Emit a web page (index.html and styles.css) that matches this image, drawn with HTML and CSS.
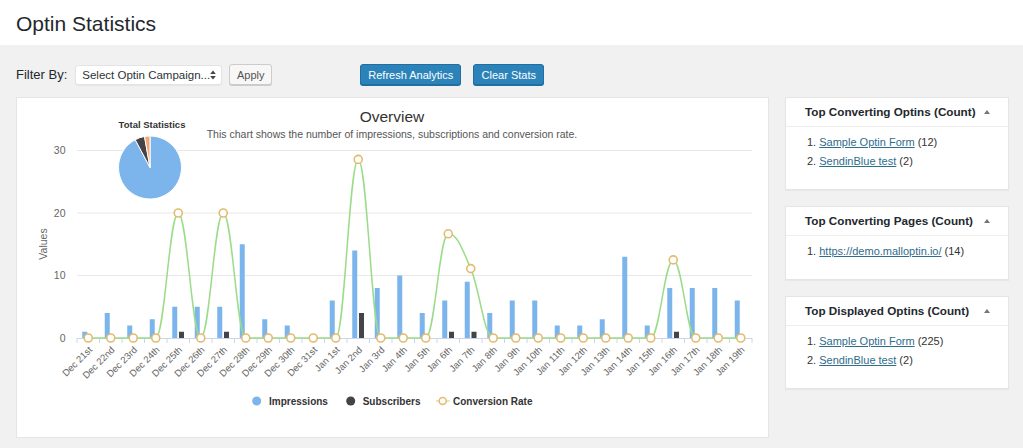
FILE: index.html
```html
<!DOCTYPE html>
<html lang="en">
<head>
<meta charset="utf-8">
<title>Optin Statistics</title>
<link rel="stylesheet" href="styles.css">
</head>
<body>
<header class="page-head"><h1>Optin Statistics</h1></header>

<div class="toolbar">
  <label class="filter-label">Filter By:</label>
  <div class="select">
    <span>Select Optin Campaign...</span>
    <svg class="updown" width="6" height="10" viewBox="0 0 6 10"><path d="M3 0.5 L5.8 4 H0.2 Z M3 9.5 L5.8 6 H0.2 Z"/></svg>
  </div>
  <button class="btn btn-apply">Apply</button>
  <button class="btn btn-primary btn-refresh">Refresh Analytics</button>
  <button class="btn btn-primary btn-clear">Clear Stats</button>
</div>

<main class="layout">
  <section class="chart-panel">
    <svg class="chart" width="751" height="339" viewBox="17 98 751 339">
      <text class="c-title" x="392" y="121.5" text-anchor="middle">Overview</text>
      <text class="c-sub" x="392" y="137.5" text-anchor="middle">This chart shows the number of impressions, subscriptions and conversion rate.</text>

      <g class="grid">
        <line x1="77" x2="752" y1="150.5" y2="150.5"/>
        <line x1="77" x2="752" y1="213" y2="213"/>
        <line x1="77" x2="752" y1="275.5" y2="275.5"/>
      </g>
      <line class="axis" x1="77" x2="752" y1="338.5" y2="338.5"/>
      <path class="ticks" d="M77,338v5M99.5,338v5M122,338v5M144.5,338v5M167,338v5M189.5,338v5M212,338v5M234.5,338v5M257,338v5M279.5,338v5M302,338v5M324.5,338v5M347,338v5M369.5,338v5M392,338v5M414.5,338v5M437,338v5M459.5,338v5M482,338v5M504.5,338v5M527,338v5M549.5,338v5M572,338v5M594.5,338v5M617,338v5M639.5,338v5M662,338v5M684.5,338v5M707,338v5M729.5,338v5M752,338v5"/>

      <g class="ylab">
        <text x="65.5" y="154" text-anchor="end">30</text>
        <text x="65.5" y="216.5" text-anchor="end">20</text>
        <text x="65.5" y="279" text-anchor="end">10</text>
        <text x="65.5" y="341.5" text-anchor="end">0</text>
      </g>
      <text class="ytitle" x="0" y="0" text-anchor="middle" transform="translate(46.5,244) rotate(-90)">Values</text>

      <g class="bars-imp">
        <rect x="82.25" y="331.75" width="5" height="6.25"/>
        <rect x="104.75" y="313" width="5" height="25"/>
        <rect x="127.25" y="325.5" width="5" height="12.5"/>
        <rect x="149.75" y="319.25" width="5" height="18.75"/>
        <rect x="172.25" y="306.75" width="5" height="31.25"/>
        <rect x="194.75" y="306.75" width="5" height="31.25"/>
        <rect x="217.25" y="306.75" width="5" height="31.25"/>
        <rect x="239.75" y="244.25" width="5" height="93.75"/>
        <rect x="262.25" y="319.25" width="5" height="18.75"/>
        <rect x="284.75" y="325.5" width="5" height="12.5"/>
        <rect x="329.75" y="300.5" width="5" height="37.5"/>
        <rect x="352.25" y="250.5" width="5" height="87.5"/>
        <rect x="374.75" y="288" width="5" height="50"/>
        <rect x="397.25" y="275.5" width="5" height="62.5"/>
        <rect x="419.75" y="313" width="5" height="25"/>
        <rect x="442.25" y="300.5" width="5" height="37.5"/>
        <rect x="464.75" y="281.75" width="5" height="56.25"/>
        <rect x="487.25" y="313" width="5" height="25"/>
        <rect x="509.75" y="300.5" width="5" height="37.5"/>
        <rect x="532.25" y="300.5" width="5" height="37.5"/>
        <rect x="554.75" y="325.5" width="5" height="12.5"/>
        <rect x="577.25" y="325.5" width="5" height="12.5"/>
        <rect x="599.75" y="319.25" width="5" height="18.75"/>
        <rect x="622.25" y="256.75" width="5" height="81.25"/>
        <rect x="644.75" y="325.5" width="5" height="12.5"/>
        <rect x="667.25" y="288" width="5" height="50"/>
        <rect x="689.75" y="288" width="5" height="50"/>
        <rect x="712.25" y="288" width="5" height="50"/>
        <rect x="734.75" y="300.5" width="5" height="37.5"/>
      </g>
      <g class="bars-sub">
        <rect x="179" y="331.75" width="5" height="6.25"/>
        <rect x="224" y="331.75" width="5" height="6.25"/>
        <rect x="359" y="313" width="5" height="25"/>
        <rect x="449" y="331.75" width="5" height="6.25"/>
        <rect x="471.5" y="331.75" width="5" height="6.25"/>
        <rect x="674" y="331.75" width="5" height="6.25"/>
      </g>

      <path class="rate-line" d="M88.25,338 L155.75,338 C164.75,338 169.25,213 178.25,213 C187.25,213 191.75,338 200.75,338 C209.75,338 214.25,213 223.25,213 C232.25,213 236.75,338 245.75,338 L335.75,338 C344.75,338 349.25,159.4 358.25,159.4 C367.25,159.4 371.75,338 380.75,338 L425.75,338 C434.75,338 439.25,233.8 448.25,233.8 C457.25,233.8 461.75,247.76 470.75,268.6 C479.75,289.44 484.25,338 493.25,338 L650.75,338 C659.75,338 664.25,259.9 673.25,259.9 C682.25,259.9 686.75,338 695.75,338 L740.75,338"/>
      <g class="markers">
        <circle cx="88.25" cy="338" r="4"/>
        <circle cx="110.75" cy="338" r="4"/>
        <circle cx="133.25" cy="338" r="4"/>
        <circle cx="155.75" cy="338" r="4"/>
        <circle cx="178.25" cy="213" r="4"/>
        <circle cx="200.75" cy="338" r="4"/>
        <circle cx="223.25" cy="213" r="4"/>
        <circle cx="245.75" cy="338" r="4"/>
        <circle cx="268.25" cy="338" r="4"/>
        <circle cx="290.75" cy="338" r="4"/>
        <circle cx="313.25" cy="338" r="4"/>
        <circle cx="335.75" cy="338" r="4"/>
        <circle cx="358.25" cy="159.4" r="4"/>
        <circle cx="380.75" cy="338" r="4"/>
        <circle cx="403.25" cy="338" r="4"/>
        <circle cx="425.75" cy="338" r="4"/>
        <circle cx="448.25" cy="233.8" r="4"/>
        <circle cx="470.75" cy="268.6" r="4"/>
        <circle cx="493.25" cy="338" r="4"/>
        <circle cx="515.75" cy="338" r="4"/>
        <circle cx="538.25" cy="338" r="4"/>
        <circle cx="560.75" cy="338" r="4"/>
        <circle cx="583.25" cy="338" r="4"/>
        <circle cx="605.75" cy="338" r="4"/>
        <circle cx="628.25" cy="338" r="4"/>
        <circle cx="650.75" cy="338" r="4"/>
        <circle cx="673.25" cy="259.9" r="4"/>
        <circle cx="695.75" cy="338" r="4"/>
        <circle cx="718.25" cy="338" r="4"/>
        <circle cx="740.75" cy="338" r="4"/>
      </g>

      <g class="xlab">
        <text x="92.75" y="350.5" text-anchor="end" transform="rotate(-45 92.75 350.5)">Dec 21st</text>
        <text x="115.25" y="350.5" text-anchor="end" transform="rotate(-45 115.25 350.5)">Dec 22nd</text>
        <text x="137.75" y="350.5" text-anchor="end" transform="rotate(-45 137.75 350.5)">Dec 23rd</text>
        <text x="160.25" y="350.5" text-anchor="end" transform="rotate(-45 160.25 350.5)">Dec 24th</text>
        <text x="182.75" y="350.5" text-anchor="end" transform="rotate(-45 182.75 350.5)">Dec 25th</text>
        <text x="205.25" y="350.5" text-anchor="end" transform="rotate(-45 205.25 350.5)">Dec 26th</text>
        <text x="227.75" y="350.5" text-anchor="end" transform="rotate(-45 227.75 350.5)">Dec 27th</text>
        <text x="250.25" y="350.5" text-anchor="end" transform="rotate(-45 250.25 350.5)">Dec 28th</text>
        <text x="272.75" y="350.5" text-anchor="end" transform="rotate(-45 272.75 350.5)">Dec 29th</text>
        <text x="295.25" y="350.5" text-anchor="end" transform="rotate(-45 295.25 350.5)">Dec 30th</text>
        <text x="317.75" y="350.5" text-anchor="end" transform="rotate(-45 317.75 350.5)">Dec 31st</text>
        <text x="340.25" y="350.5" text-anchor="end" transform="rotate(-45 340.25 350.5)">Jan 1st</text>
        <text x="362.75" y="350.5" text-anchor="end" transform="rotate(-45 362.75 350.5)">Jan 2nd</text>
        <text x="385.25" y="350.5" text-anchor="end" transform="rotate(-45 385.25 350.5)">Jan 3rd</text>
        <text x="407.75" y="350.5" text-anchor="end" transform="rotate(-45 407.75 350.5)">Jan 4th</text>
        <text x="430.25" y="350.5" text-anchor="end" transform="rotate(-45 430.25 350.5)">Jan 5th</text>
        <text x="452.75" y="350.5" text-anchor="end" transform="rotate(-45 452.75 350.5)">Jan 6th</text>
        <text x="475.25" y="350.5" text-anchor="end" transform="rotate(-45 475.25 350.5)">Jan 7th</text>
        <text x="497.75" y="350.5" text-anchor="end" transform="rotate(-45 497.75 350.5)">Jan 8th</text>
        <text x="520.25" y="350.5" text-anchor="end" transform="rotate(-45 520.25 350.5)">Jan 9th</text>
        <text x="542.75" y="350.5" text-anchor="end" transform="rotate(-45 542.75 350.5)">Jan 10th</text>
        <text x="565.25" y="350.5" text-anchor="end" transform="rotate(-45 565.25 350.5)">Jan 11th</text>
        <text x="587.75" y="350.5" text-anchor="end" transform="rotate(-45 587.75 350.5)">Jan 12th</text>
        <text x="610.25" y="350.5" text-anchor="end" transform="rotate(-45 610.25 350.5)">Jan 13th</text>
        <text x="632.75" y="350.5" text-anchor="end" transform="rotate(-45 632.75 350.5)">Jan 14th</text>
        <text x="655.25" y="350.5" text-anchor="end" transform="rotate(-45 655.25 350.5)">Jan 15th</text>
        <text x="677.75" y="350.5" text-anchor="end" transform="rotate(-45 677.75 350.5)">Jan 16th</text>
        <text x="700.25" y="350.5" text-anchor="end" transform="rotate(-45 700.25 350.5)">Jan 17th</text>
        <text x="722.75" y="350.5" text-anchor="end" transform="rotate(-45 722.75 350.5)">Jan 18th</text>
        <text x="745.25" y="350.5" text-anchor="end" transform="rotate(-45 745.25 350.5)">Jan 19th</text>
      </g>

      <text class="pie-title" x="152" y="128" text-anchor="middle">Total Statistics</text>
      <g class="pie">
        <path class="slice-imp" d="M150,167.5 L150,136 A31.5,31.5 0 1 1 135.21,139.69 Z"/>
        <path class="slice-sub" d="M150,167.5 L135.21,139.69 A31.5,31.5 0 0 1 144.53,136.48 Z"/>
        <path class="slice-rate" d="M150,167.5 L144.53,136.48 A31.5,31.5 0 0 1 150,136 Z"/>
      </g>

      <g class="legend">
        <circle class="lg-imp" cx="256.7" cy="401" r="4.5"/>
        <text x="269" y="404.5">Impressions</text>
        <circle class="lg-sub" cx="350.7" cy="401" r="4.5"/>
        <text x="362.7" y="404.5">Subscribers</text>
        <line class="lg-line" x1="436" x2="449.5" y1="401" y2="401"/>
        <circle class="lg-rate" cx="442.7" cy="401" r="3.5"/>
        <text x="453" y="404.5">Conversion Rate</text>
      </g>
    </svg>
  </section>

  <aside class="sidebar">
    <div class="box">
      <div class="box-head"><h2>Top Converting Optins (Count)</h2><span class="toggle"></span></div>
      <ol class="box-list">
        <li><a href="#">Sample Optin Form</a> (12)</li>
        <li><a href="#">SendinBlue test</a> (2)</li>
      </ol>
    </div>
    <div class="box">
      <div class="box-head"><h2>Top Converting Pages (Count)</h2><span class="toggle"></span></div>
      <ol class="box-list">
        <li><a href="#">https://demo.malloptin.io/</a> (14)</li>
      </ol>
    </div>
    <div class="box">
      <div class="box-head"><h2>Top Displayed Optins (Count)</h2><span class="toggle"></span></div>
      <ol class="box-list">
        <li><a href="#">Sample Optin Form</a> (225)</li>
        <li><a href="#">SendinBlue test</a> (2)</li>
      </ol>
    </div>
  </aside>
</main>
</body>
</html>
```

FILE: styles.css
```css
* { box-sizing: border-box; }

body {
  margin: 0;
  background: #f1f1f1;
  font-family: "Liberation Sans", Arial, sans-serif;
  color: #23282d;
}

.page-head {
  background: #fff;
  height: 45px;
  padding: 12px 16px 0;
}
.page-head h1 {
  margin: 0;
  font-size: 21px;
  font-weight: 400;
  line-height: 24px;
  color: #23282d;
}

.toolbar {
  display: flex;
  align-items: center;
  height: 21px;
  margin: 19px 0 0 16px;
}
.filter-label {
  font-size: 13px;
  margin-right: 8px;
  color: #23282d;
}
.select {
  width: 147px;
  height: 20px;
  background: #fff;
  border: 1px solid #e4e4e4;
  border-radius: 3px;
  box-shadow: 0 1px 1px rgba(0,0,0,.05);
  display: flex;
  align-items: center;
  justify-content: space-between;
  padding: 0 5px 0 6px;
  font-size: 11.5px;
  color: #2c3338;
}
.updown { fill: #444; }

.btn {
  height: 21px;
  border-radius: 3px;
  font-family: inherit;
  font-size: 11px;
  padding: 0;
  cursor: pointer;
}
.btn-apply {
  width: 43px;
  margin-left: 7px;
  background: #f7f7f7;
  border: 1px solid #cccccc;
  box-shadow: 0 1px 0 #cccccc;
  color: #555;
}
.btn-primary {
  background: #2c83ba;
  border: 1px solid #1f6fa2;
  box-shadow: 0 1px 0 #1f6fa2;
  color: #fff;
}
.btn-refresh { width: 101px; margin-left: 88px; }
.btn-clear { width: 71px; margin-left: 12px; }

.layout {
  display: grid;
  grid-template-columns: 753px 224px;
  column-gap: 16px;
  margin: 12px 0 0 16px;
  align-items: start;
}

.chart-panel {
  background: #fff;
  border: 1px solid #e5e5e5;
  box-shadow: 0 1px 1px rgba(0,0,0,.04);
}
.chart {
  display: block;
  font-family: "Liberation Sans", Arial, sans-serif;
}
.c-title { font-size: 15.5px; fill: #333; }
.c-sub { font-size: 10.5px; fill: #555; }
.grid line { stroke: #e8e8e8; stroke-width: 1; }
.axis { stroke: #ccd6eb; stroke-width: 1; }
.ticks { stroke: #ccd6eb; stroke-width: 1; fill: none; }
.ylab text { font-size: 10.5px; fill: #666; }
.ytitle { font-size: 10.5px; fill: #666; }
.xlab text { font-size: 9.5px; fill: #666; }
.bars-imp rect { fill: #7cb5ec; }
.bars-sub rect { fill: #434348; }
.rate-line { fill: none; stroke: #9bdc88; stroke-width: 1.5; }
.markers circle { fill: #fff; stroke: #e2bb70; stroke-width: 1.6; }
.pie-title { font-size: 9.5px; font-weight: 700; fill: #333; }
.pie path { stroke: #fff; stroke-width: 1; }
.slice-imp { fill: #7cb5ec; }
.slice-sub { fill: #434348; }
.slice-rate { fill: #f4a772; }
.legend text { font-size: 10px; font-weight: 700; fill: #333; }
.lg-imp { fill: #7cb5ec; }
.lg-sub { fill: #434348; }
.lg-line { stroke: #d9dfa8; stroke-width: 1.5; }
.lg-rate { fill: #fff; stroke: #e2bb70; stroke-width: 1.5; }

.sidebar {
  display: flex;
  flex-direction: column;
  gap: 16px;
}
.box {
  background: #fff;
  border: 1px solid #e5e5e5;
  box-shadow: 0 1px 1px rgba(0,0,0,.04);
}
.box-head {
  height: 29px;
  border-bottom: 1px solid #eeeeee;
  display: flex;
  align-items: center;
  justify-content: space-between;
  padding: 0 18px 0 19px;
}
.box-head h2 {
  margin: 0;
  font-size: 11.7px;
  font-weight: 700;
  line-height: 28px;
  color: #23282d;
}
.toggle {
  width: 0;
  height: 0;
  border-left: 3.5px solid transparent;
  border-right: 3.5px solid transparent;
  border-bottom: 4px solid #72777c;
}
.box-list {
  margin: 0;
  padding: 6px 12px 18px 21px;
  list-style: decimal inside;
  font-size: 11px;
  line-height: 19px;
  color: #333;
}
.box-list a {
  color: #2f6d8c;
  text-decoration: underline;
}
```
